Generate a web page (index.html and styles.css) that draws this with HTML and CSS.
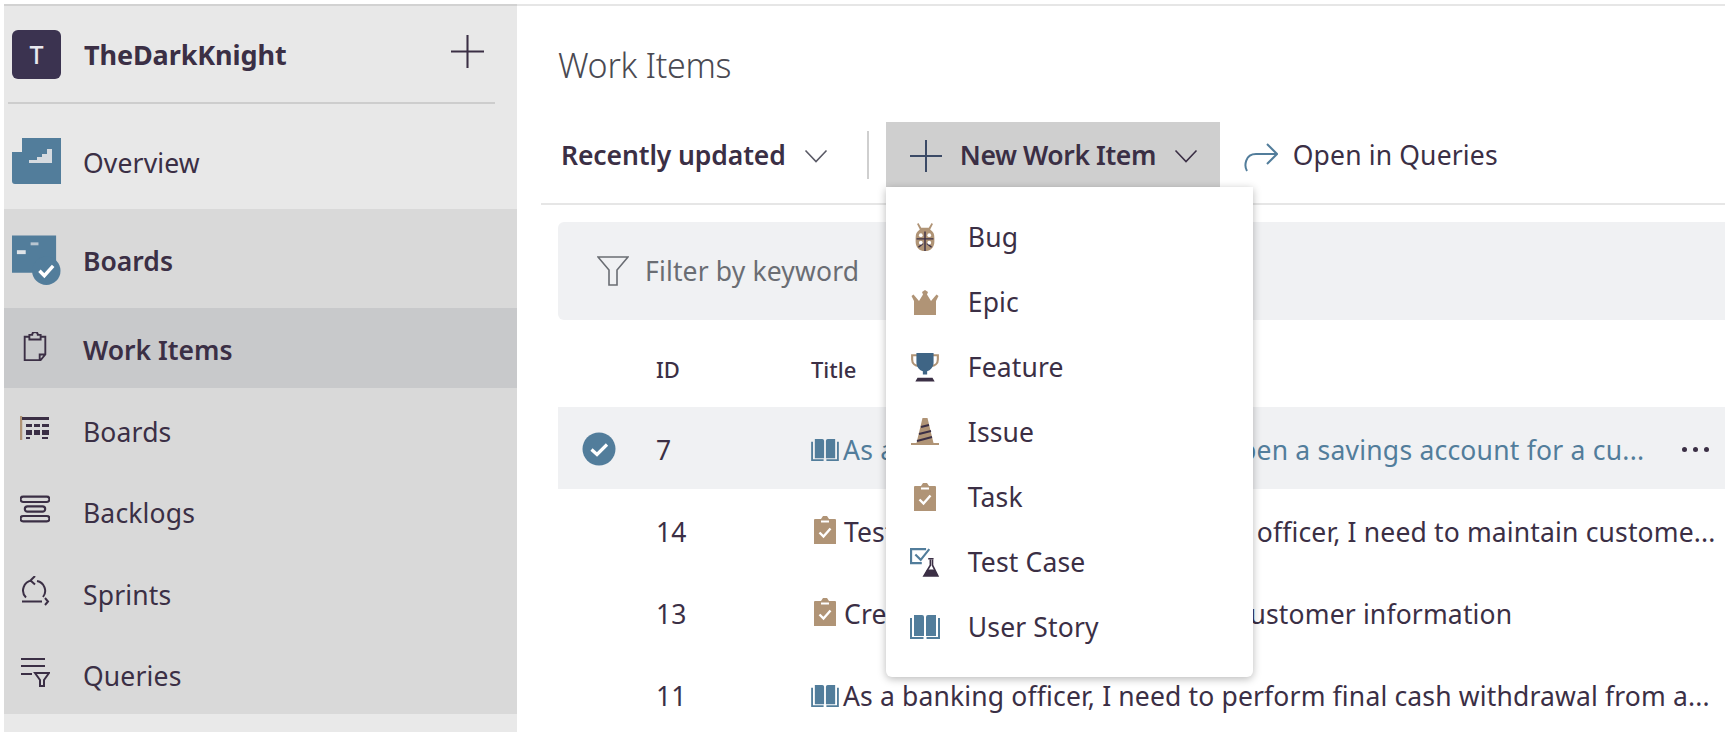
FILE: index.html
```html
<!DOCTYPE html>
<html lang="en">
<head>
<meta charset="utf-8">
<title>Work Items</title>
<link rel="stylesheet" href="styles.css">
</head>
<body>
<svg class="defs" width="0" height="0" aria-hidden="true">
  <defs>
    <symbol id="i-book" viewBox="0 0 30 26">
      <path d="M1 4v20h12.5M29 4v20H16.500" fill="none" stroke="currentColor" stroke-width="2"/>
      <path d="M4 1h8a2 2 0 0 1 2 2v19H4zM16 3a2 2 0 0 1 2-2h8v21H16z" fill="currentColor"/>
    </symbol>
    <symbol id="i-task" viewBox="0 0 24 30">
      <path d="M2 4h6l2-3h4l2 3h6a1 1 0 0 1 1 1v24H1V5a1 1 0 0 1 1-1z" fill="currentColor"/>
      <path d="M8 6.500h8" stroke="#fff" stroke-width="2"/>
      <path d="M6.500 17.500l4 4 7-8" fill="none" stroke="#fff" stroke-width="2.400"/>
    </symbol>
    <symbol id="i-chev" viewBox="0 0 24 14">
      <path d="M1.500 1.500L12 12.500 22.500 1.500" fill="none" stroke="currentColor" stroke-width="1.600"/>
    </symbol>
    <symbol id="i-plus" viewBox="0 0 32 32">
      <path d="M16 0v32M0 16h32" fill="none" stroke="currentColor" stroke-width="2"/>
    </symbol>
  </defs>
</svg>
<div class="app">
  <aside class="sidebar">
    <header class="org">
      <div class="avatar">T</div>
      <div class="org-name">TheDarkKnight</div>
      <svg class="org-add"><use href="#i-plus"/></svg>
    </header>
    <div class="org-rule"></div>
    <a class="nav-top">
      <svg class="hub-icon" viewBox="0 0 49 46"><path d="M10 0h39v46H3a3 3 0 0 1-3-3V14h10z" fill="#527d9b"/><path d="M17 22h8v-3h5v-3h5v-5h5v14H17z" fill="#d6dbe0"/></svg>
      <span>Overview</span>
    </a>
    <div class="hub-group">
      <a class="nav-hub">
        <svg class="hub-icon hub-boards" viewBox="0 0 50 50"><path d="M0 0h45v38H0z" fill="#527d9b"/><circle cx="35" cy="36" r="14.500" fill="#527d9b"/><path d="M28 36l5 5 9-10" fill="none" stroke="#fff" stroke-width="3.500"/><path d="M5 15h9v4H5z" fill="#e0e4e8"/><path d="M19 7h8v3h-8z" fill="#b9c6d1"/></svg>
        <span>Boards</span>
      </a>
      <a class="nav-sub active">
        <svg class="sub-icon" viewBox="0 0 26 32"><path d="M7 5H2v25h17l5-6V5h-5M7 3h3a3 3 0 0 1 6 0h3v5H7zM18 30v-6h6" fill="none" stroke="currentColor" stroke-width="2"/></svg>
        <span>Work Items</span>
      </a>
      <a class="nav-sub">
        <svg class="sub-icon" viewBox="0 0 30 26"><path d="M1 1v24" stroke="#b09476" stroke-width="2.500"/><path d="M2 2h27v3H2zM6 9h6v3H6zM14 9h6v3h-6zM22 9h7v3h-7zM6 15h6v5H6zM14 15h6v5h-6zM22 15h7v5h-7zM6 22h4v2H6zM22 22h6v2h-6z" fill="currentColor"/></svg>
        <span>Boards</span>
      </a>
      <a class="nav-sub">
        <svg class="sub-icon" viewBox="0 0 28 26"><path d="M3 1.500h22a1.500 1.500 0 0 1 0 5H3a1.500 1.500 0 0 1 0-5zM7 10.500h14a1.500 1.500 0 0 1 0 5H7a1.500 1.500 0 0 1 0-5zM3 19.500h22a1.500 1.500 0 0 1 0 5H3a1.500 1.500 0 0 1 0-5z" fill="none" stroke="currentColor" stroke-width="2"/></svg>
        <span>Backlogs</span>
      </a>
      <a class="nav-sub">
        <svg class="sub-icon" viewBox="0 0 30 30"><path d="M17 5a10 10 0 0 1 6 16M12 4.500a10 10 0 0 0-6 17M2 25.500h20M15 0l-4.500 4.500 4.500 4M25 22l3 3.500-3 3.500" fill="none" stroke="currentColor" stroke-width="2"/></svg>
        <span>Sprints</span>
      </a>
      <a class="nav-sub">
        <svg class="sub-icon" viewBox="0 0 30 30"><path d="M1 2h24M1 9h24M1 17h11" fill="none" stroke="currentColor" stroke-width="2"/><path d="M15 16h14l-5 7v6h-4v-6z" fill="none" stroke="currentColor" stroke-width="2"/></svg>
        <span>Queries</span>
      </a>
    </div>
    <div class="sidebar-foot"></div>
  </aside>

  <main class="content">
    <h1 class="page-title">Work Items</h1>
    <div class="toolbar">
      <button class="tb-view">
        <span>Recently updated</span>
        <svg class="chev"><use href="#i-chev"/></svg>
      </button>
      <div class="tb-sep"></div>
      <div class="tb-new-wrap">
        <button class="tb-new">
          <svg class="tb-plus"><use href="#i-plus"/></svg>
          <span>New Work Item</span>
          <svg class="chev"><use href="#i-chev"/></svg>
        </button>
        <ul class="menu">
          <li class="menu-item">
            <svg class="menu-icon tan" viewBox="0 0 28 32"><path d="M7 1l3 5h8l3-5 1.500 1-3 6a10 10 0 0 1 4.500 9v4c0 6-4 10-10 10S4 27 4 21v-4a10 10 0 0 1 4.500-9l-3-6z" fill="currentColor"/><path d="M14 10v21M5 18h18M7 27l5-4M21 27l-5-4" stroke="#3b2f45" stroke-width="1.500"/><circle cx="9.500" cy="14" r="2" fill="#fff"/><circle cx="18.500" cy="14" r="2" fill="#fff"/><circle cx="9.500" cy="22" r="2" fill="#fff"/><circle cx="18.500" cy="22" r="2" fill="#fff"/></svg>
            <span>Bug</span>
          </li>
          <li class="menu-item">
            <svg class="menu-icon tan" viewBox="0 0 30 26"><path d="M4 26V12L1.500 7l2-1.500L9 12l4-6.500-1-2.500 3-2 3 2-1 2.500 4 6.500 5.500-6.500 2 1.500L26 12v14z" fill="currentColor"/></svg>
            <span>Epic</span>
          </li>
          <li class="menu-item">
            <svg class="menu-icon trophy" viewBox="0 0 28 28"><path d="M7 3H2v4c0 4 3 6 6 6M21 3h5v4c0 4-3 6-6 6" fill="none" stroke="#b09476" stroke-width="2"/><path d="M6 1h16v9c0 4-3 7-6 8v3h-4v-3c-3-1-6-4-6-8z" fill="currentColor"/><path d="M7 24h14l2 3.500H5z" fill="#3b2f45"/></svg>
            <span>Feature</span>
          </li>
          <li class="menu-item">
            <svg class="menu-icon tan" viewBox="0 0 30 28"><path d="M12.500 0h5l6 25h5.500v2H1v-2h5.500z" fill="currentColor"/><path d="M11 9l8-2M9 16l12-3M7 23l15-4" stroke="#3b2f45" stroke-width="2"/></svg>
            <span>Issue</span>
          </li>
          <li class="menu-item">
            <svg class="menu-icon tan"><use href="#i-task"/></svg>
            <span>Task</span>
          </li>
          <li class="menu-item">
            <svg class="menu-icon blue" viewBox="0 0 28 28"><path d="M15 2H1v13h10" fill="none" stroke="currentColor" stroke-width="2"/><path d="M5 7l5 5 8-10" fill="none" stroke="currentColor" stroke-width="2"/><path d="M17 11h5M19 12v5l-6 10h13l-5-10v-5" fill="none" stroke="#3b2f45" stroke-width="1.500"/><path d="M16 21h7l3 6H13z" fill="#3b2f45"/></svg>
            <span>Test Case</span>
          </li>
          <li class="menu-item">
            <svg class="menu-icon blue"><use href="#i-book"/></svg>
            <span>User Story</span>
          </li>
        </ul>
      </div>
      <button class="tb-link">
        <svg class="tb-arrow" viewBox="0 0 34 32"><path d="M3 31c-3-5-2-17 9-17h20M23 4l10 10-10 10" fill="none" stroke="#527d9b" stroke-width="2"/></svg>
        <span>Open in Queries</span>
      </button>
    </div>
    <div class="tb-rule"></div>
    <div class="filter">
      <svg class="funnel" viewBox="0 0 32 30"><path d="M1 1h30L20 14v15h-8V14z" fill="none" stroke="#6a6d73" stroke-width="1.600"/></svg>
      <span>Filter by keyword</span>
    </div>
    <div class="thead">
      <div class="c-id">ID</div>
      <div class="c-title">Title</div>
    </div>
    <div class="row selected">
      <div class="c-check"><svg class="check" viewBox="0 0 36 36"><circle cx="18" cy="18" r="16.500" fill="#527d9b"/><path d="M10.500 18.500l5.500 5 10-10" fill="none" stroke="#fff" stroke-width="3.200"/></svg></div>
      <div class="c-id">7</div>
      <div class="c-title link"><svg class="i-book"><use href="#i-book"/></svg><span>As a banking officer, I need to open a savings account for a cu...</span></div>
      <div class="dots"><i></i><i></i><i></i></div>
    </div>
    <div class="row">
      <div class="c-check"></div>
      <div class="c-id">14</div>
      <div class="c-title"><svg class="i-task"><use href="#i-task"/></svg><span>Test case creation, for a banking officer, I need to maintain custome...</span></div>
    </div>
    <div class="row">
      <div class="c-check"></div>
      <div class="c-id">13</div>
      <div class="c-title"><svg class="i-task"><use href="#i-task"/></svg><span>Create a new table to maintain customer information</span></div>
    </div>
    <div class="row">
      <div class="c-check"></div>
      <div class="c-id">11</div>
      <div class="c-title"><svg class="i-book"><use href="#i-book"/></svg><span>As a banking officer, I need to perform final cash withdrawal from a...</span></div>
    </div>
  </main>
</div>
</body>
</html>
```
FILE: styles.css
```css
* { box-sizing: border-box; }
html, body { margin: 0; height: 100%; background: #fff; overflow: hidden; }
body { font-family: "Noto Sans", "Open Sans", sans-serif; color: #3b2f45; font-size: 26.500px; letter-spacing: .15px; }
.defs { position: absolute; }
.app { display: flex; height: 737px; padding: 4px 0 5px 4px; }
button { font: inherit; letter-spacing: inherit; color: inherit; border: 0; background: none; padding: 0; display: flex; align-items: center; }

.sidebar { width: 513px; flex: none; background: #e8e8e8; border-top: 2px solid #d2d2d2; display: flex; flex-direction: column; }
.org { height: 96px; display: flex; align-items: center; padding-left: 8px; }
.avatar { width: 49px; height: 49px; border-radius: 6px; background: #3b3350; color: #e8e8ee; display: flex; align-items: center; justify-content: center; font-size: 25px; font-weight: 500; }
.org-name { margin-left: 23px; font-size: 27px; font-weight: 700; letter-spacing: -.1px; flex: 1; }
.org-add { width: 33px; height: 33px; margin-right: 33px; color: #3b2f45; margin-top: -6px; }
.org-rule { height: 2px; margin: 0 22px 0 4px; background: #cdcdcd; }
.nav-top { height: 105px; display: flex; align-items: center; padding: 13px 0 0 8px; }
.nav-top span, .nav-hub span { margin-left: 22px; }
.hub-icon { width: 49px; height: 46px; flex: none; margin-top: -5px; }
.hub-group { background: #d9d9d9; height: 505px; }
.nav-hub { height: 99px; display: flex; align-items: center; padding: 4px 0 0 8px; font-weight: 600; letter-spacing: 0; }
.hub-boards { height: 50px; margin-top: -2px; }
.nav-sub { height: 81.500px; display: flex; align-items: center; padding: 6px 0 0 16px; }
.nav-sub.active { height: 80px; background: #c8c9cb; font-weight: 600; letter-spacing: 0; padding-top: 3px; }
.sub-icon { width: 30px; height: 30px; flex: none; margin-top: -8px; }
.nav-sub.active .sub-icon { margin-top: -6px; }
.nav-sub span { margin-left: 33px; }
.sidebar-foot { flex: 1; background: #e9e9e9; }

.content { flex: 1; min-width: 0; position: relative; border-top: 2px solid #e6e6e6; padding-left: 24px; }
.page-title { margin: 0 0 0 17px; height: 116px; font-size: 34px; font-weight: 300; color: #4a4a52; line-height: 119px; letter-spacing: -.3px; }
.toolbar { display: flex; align-items: center; height: 65px; padding-left: 20px; }
.tb-view { font-weight: 600; letter-spacing: -.1px; }
.chev { width: 24px; height: 14px; margin-left: 18px; color: #3b2f45; margin-top: 3px; }
.tb-view .chev { color: #5a5a66; }
.tb-sep { width: 2px; height: 48px; background: #cfcfcf; margin-left: 39px; }
.tb-new-wrap { position: relative; margin-left: 17px; }
.tb-new { width: 334px; height: 65px; background: #cfcfcf; padding-left: 24px; font-weight: 600; letter-spacing: -.4px; }
.tb-plus { width: 32px; height: 32px; color: #3b4a66; margin-right: 18px; margin-top: 2px; }
.tb-link { margin-left: 24px; }
.tb-arrow { width: 34px; height: 32px; margin-right: 15px; margin-top: 3px; }
.tb-rule { height: 2px; background: #e6e6e6; margin: 16px 0 17px 0; }

.menu { position: absolute; left: 0; top: 65px; width: 367px; height: 490px; margin: 0; padding: 17px 0 0; list-style: none; background: #fff; border-radius: 0 0 6px 6px; box-shadow: 0 2px 9px rgba(0,0,0,.28); z-index: 2; font-weight: 400; letter-spacing: .15px; }
.menu-item { height: 65px; display: flex; align-items: center; }
.menu-icon { width: 30px; height: 30px; margin-left: 24px; margin-right: 28px; flex: none; }
.tan { color: #b09476; }
.blue { color: #527d9b; }
.trophy { color: #3f6585; }

.filter { margin-left: 17px; height: 98px; background: #f0f1f3; border-radius: 6px 0 0 6px; display: flex; align-items: center; padding-left: 39px; color: #6a6d73; }
.funnel { width: 32px; height: 30px; margin-right: 16px; }
.thead { height: 87px; margin-left: 17px; display: flex; align-items: center; padding: 10px 0 0 98px; font-size: 22px; font-weight: 500; letter-spacing: 0; }
.thead .c-id { width: 155px; }
.row { height: 82px; margin-left: 17px; display: flex; align-items: center; position: relative; padding-top: 3px; }
.selected { background: #f0f1f3; }
.c-check { width: 98px; flex: none; display: flex; padding-left: 23px; }
.check { width: 36px; height: 36px; margin-top: -2px; }
.row .c-id { width: 155px; flex: none; }
.row .c-title { display: flex; align-items: center; white-space: nowrap; }
.link { color: #527d9b; letter-spacing: .22px; }
.i-book { width: 28px; height: 24px; color: #527d9b; margin-right: 4px; }
.i-task { width: 24px; height: 30px; color: #b09476; margin: -4px 7px 0 2px; }
.dots { position: absolute; left: 1124px; top: 40px; display: flex; gap: 6px; }
.dots i { width: 5px; height: 5px; border-radius: 50%; background: #3b2f45; }
```
